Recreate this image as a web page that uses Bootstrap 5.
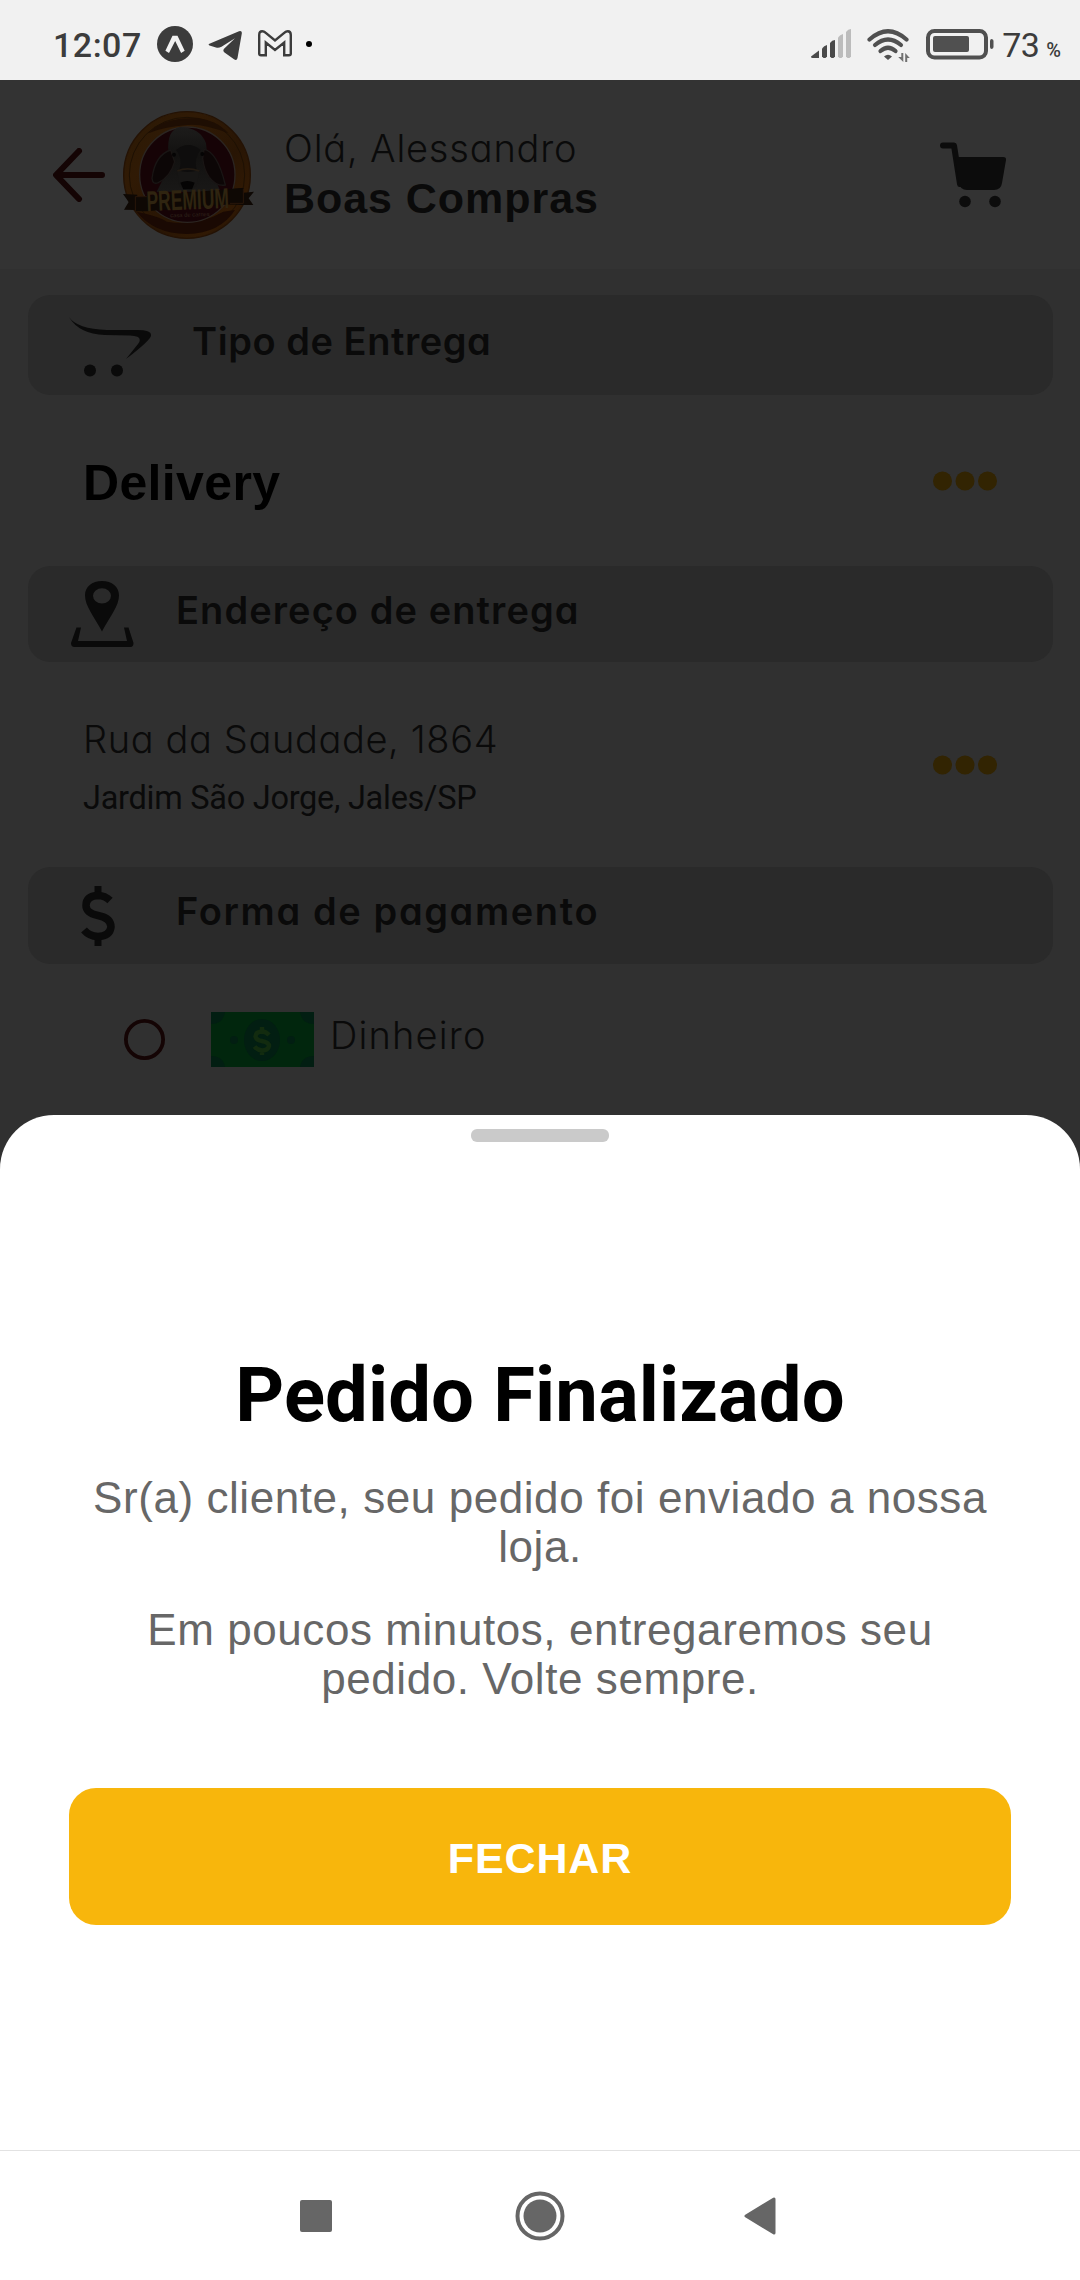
<!DOCTYPE html>
<html lang="pt-BR">
<head>
<meta charset="utf-8">
<meta name="viewport" content="width=device-width, initial-scale=1">
<title>Pedido Finalizado</title>
<link href="https://cdn.jsdelivr.net/npm/bootstrap@5.3.0/dist/css/bootstrap.min.css" rel="stylesheet">
<style>
  body { width: 1080px; height: 2280px; margin: 0; overflow: hidden; background: #303030; font-family: "Liberation Sans", Arial, sans-serif; }
  svg { display: block; flex: none; }
  .geo { font-family: Inter, sans-serif; font-feature-settings: "cv11" 1; color: #0a0a0a; white-space: nowrap; }
  .status-strip { height: 80px; background: #f1f1f1; padding: 8px 19px 0 53px; color: #3c3c3c; font-family: Roboto, sans-serif; }
  .clock { font-size: 34px; font-weight: 500; line-height: 40px; width: 104px; letter-spacing: .5px; padding-top: 17px; }
  .batt-num { font-size: 34px; line-height: 40px; margin-left: 8px; width: 44px; letter-spacing: -.6px; padding-top: 17px; }
  .batt-pct { font-size: 20px; line-height: 24px; padding-top: 30px; font-weight: 500; }
  .ico-expo { margin-top: 18px; }
  .ico-tg, .ico-mail { margin: 22px 0 0 15px; }
  .ico-dot { margin: 33px 0 0 14px; }
  .ico-signal { margin-top: 21px; }
  .ico-wifi, .ico-batt { margin: 21px 0 0 15px; }
  .ico-batt { margin-left: 16px; margin-right: -1px; }
  .app-head { height: 189px; background: #333; padding: 0 73px 0 53px; }
  .brand { margin-left: 18px; }
  .greet { margin: 0 auto 4px 30px; }
  .hello { font-size: 38px; font-weight: 300; line-height: 50px; letter-spacing: .8px; }
  .shop { font-size: 43px; font-weight: 700; line-height: 50px; color: #0a0a0a; letter-spacing: .95px; }
  .sec-bar { margin: 0 27px 0 28px; height: 97px; border-radius: 22px; background: #2a2a2a; padding-left: 42px; }
  .sec-bar .geo { font-size: 38px; font-weight: 600; line-height: 50px; margin-bottom: 9px; }
  .bar-type { height: 100px; margin-top: 26px; padding-left: 41px; }
  .bar-type svg { margin-top: 3px; }
  .bar-type .geo { margin-left: 41px; letter-spacing: .55px; }
  .bar-addr { height: 96px; }
  .bar-addr .geo { margin-left: 42px; letter-spacing: 1.08px; }
  .bar-pay { padding-left: 52px; }
  .bar-pay .geo { margin-left: 60px; letter-spacing: 1.62px; }
  .line-item { padding: 0 83px 0 83px; }
  .row-type { height: 171px; }
  .row-addr { height: 205px; }
  .addr { padding-top: 52px; gap: 9px; }
  .row-pay { height: 151px; padding-left: 124px; }
  .bill { margin-left: 46px; }
  .mode { font-size: 50px; font-weight: 700; color: #000; line-height: 60px; padding-top: 5px; letter-spacing: .35px; }
  .street { font-size: 38px; font-weight: 300; line-height: 50px; letter-spacing: .62px; }
  .cash { margin: 0 0 9px 16px; letter-spacing: 1.15px; }
  .town { font-family: Roboto, sans-serif; font-size: 32.5px; line-height: 50px; color: #0a0a0a; letter-spacing: -.27px; }
  .sheet { height: 1035px; background: #fff; border-radius: 54px 54px 0 0; padding: 14px 69px 0; }
  .grip { width: 138px; height: 13px; border-radius: 6px; background: #cacaca; }
  .done-title { font-family: Roboto, sans-serif; font-size: 76px; font-weight: 700; line-height: 90px; color: #000; margin: 208px 0 33px; letter-spacing: .12px; }
  .note { font-size: 44px; line-height: 49px; color: #676767; margin: 0 auto 34px; width: 920px; letter-spacing: .57px; }
  .close-btn { height: 137px; margin-top: 51px; border-radius: 27px; background: #f8b60c; color: #fff; font-size: 43px; font-weight: 700; border: 0; padding: 3px 0 0; letter-spacing: .9px; }
  .nav-strip { height: 130px; background: #fff; border-top: 1px solid #e2e2e2; padding: 0 304px 0 300px; }
  .nav-home { margin-left: 3px; }
</style>
</head>
<body class="d-flex flex-column">
  <div class="status-strip d-flex align-items-start">
    <div class="clock">12:07</div>
    <svg class="ico-expo" width="36" height="36" viewBox="0 0 36 36"><circle cx="18" cy="18" r="18" fill="#3c3c3c"/><path d="M15.500 9.800h5l7.200 15-3.600 2.200L18.200 15 12 27l-3.600-2.200z" fill="#f1f1f1"/><path d="M18 16.500l5 10.500H13z" fill="#3c3c3c"/></svg>
    <svg class="ico-tg" width="35" height="32" viewBox="0 0 35 32"><path d="M2 13.500L31 1.200Q34.200.3 33.800 3.500L29.500 28Q28.800 31 26 29.300L16.500 22.600Q14.300 20.700 16.300 18.600L27 8.300 13.500 16.700Q10.500 18.500 8 17.500L1.500 15.500Q-.5 14.500 2 13.500z" fill="#3c3c3c"/></svg>
    <svg class="ico-mail" width="34" height="27" viewBox="0 0 34 27"><path d="M1.200 5Q1.200 1.200 4.200 1.200 6 1.200 7.500 2.700L17 10.500 26.500 2.700Q28 1.200 29.800 1.200 32.800 1.200 32.800 5V23.500Q32.800 25.300 31 25.300H26.200V12.500L17 20 7.800 12.500V25.300H3Q1.200 25.300 1.200 23.500z" fill="none" stroke="#3c3c3c" stroke-width="2.400"/></svg>
    <svg class="ico-dot" width="6" height="6"><circle cx="3" cy="3" r="3" fill="#000"/></svg>
    <svg class="ico-signal ms-auto" width="41" height="30" viewBox="0 0 41 30"><g fill="#4a4a4a"><path d="M0 27.500L8 21.500V29H1.500Q0 29 0 27.500z"/><path d="M11 19.500Q13 16.500 16 16V27.500L14.500 29H12.500L11 27.500z"/><path d="M19 14Q21 11 24 11V27.500L22.500 29H20.500L19 27.500z"/></g><g fill="#bcbcbc"><path d="M27 8.500Q29 5.500 32 5V27.500L30.500 29H28.500L27 27.500z"/><path d="M35 3Q37 0 40 0V27.500L38.500 29H36.500L35 27.500z"/></g></svg>
    <svg class="ico-wifi" width="43" height="34" viewBox="0 0 43 34"><g fill="none" stroke="#505050" stroke-width="4.200" stroke-linecap="round"><path d="M2.500 10.500Q21 -6 39.500 10.500"/><path d="M8 16Q21 5 34 16"/><path d="M13.500 22Q21 15.500 28.500 22"/></g><path d="M17 27.500Q21 24 25 27.500L21 31z" fill="#505050"/><path d="M36.300 24V33L31.200 28H34.300V24zM38.200 33V24L42.800 29H40.200V33z" fill="#707070"/></svg>
    <svg class="ico-batt" width="69" height="31" viewBox="0 0 69 31"><rect x="2" y="2" width="58" height="26.500" rx="6.500" fill="none" stroke="#505050" stroke-width="4"/><rect x="7" y="7" width="36" height="16" rx="2" fill="#505050"/><path d="M64 12Q64 10 65.800 10 67.500 10.500 67.500 12V18Q67.500 19.500 65.800 20 64 20 64 18z" fill="#505050"/></svg>
    <div class="batt-num">73</div><div class="batt-pct">%</div>
  </div>

  <header class="app-head d-flex align-items-center">
    <svg width="52" height="54" viewBox="0 0 52 54"><path d="M49 27H3.500M26 3L3 27l23 24" fill="none" stroke="#140404" stroke-width="6" stroke-linecap="round" stroke-linejoin="round"/></svg>
    <svg class="brand" width="131" height="128" viewBox="69 63 393 384">
      <defs><linearGradient id="gold" x1="0" y1="0" x2="1" y2="1"><stop offset="0" stop-color="#2a1905"/><stop offset=".3" stop-color="#301a05"/><stop offset=".6" stop-color="#281504"/><stop offset=".8" stop-color="#301904"/><stop offset="1" stop-color="#221003"/></linearGradient>
      <linearGradient id="hide" x1="0" y1="0" x2="0" y2="1"><stop offset="0" stop-color="#1d1c1b"/><stop offset=".45" stop-color="#121110"/><stop offset="1" stop-color="#191817"/></linearGradient></defs>
      <circle cx="261" cy="255" r="190" fill="url(#gold)" stroke="#241204" stroke-width="4"/>
      <circle cx="261" cy="255" r="173" fill="none" stroke="#1d1003" stroke-width="3"/>
      <path d="M145 130Q190 80 290 85 350 90 385 130 310 100 262 105 190 110 145 130z" fill="#1e0e03"/>
      <path d="M110 365Q180 380 200 395 290 410 370 365L405 360Q360 430 261 432 160 430 110 365z" fill="#1a0903"/>
      <circle cx="262" cy="254" r="143" fill="#160306" stroke="#2b2521" stroke-width="4"/>
      <path d="M170 305Q190 265 205 240V185Q200 120 240 111 300 112 318 160 322 210 335 245L362 305z" fill="url(#hide)"/>
      <path d="M212 180Q165 195 156 265 158 285 175 278 212 260 224 215zM312 178Q352 185 376 285 350 290 328 262 312 240 308 205z" fill="#0c0606" stroke="#191514" stroke-width="4"/>
      <path d="M228 180Q250 205 238 240L245 290H282L290 240Q280 205 302 180 265 150 228 180z" fill="#0e0d0d"/>
      <path d="M232 240Q262 252 298 240L290 288Q262 306 238 288z" fill="#171615"/><path d="M241 278Q262 268 284 278L276 298H250z" fill="#050404"/><path d="M232 243Q262 230 298 243" fill="none" stroke="#221a12" stroke-width="5"/>
      <circle cx="222" cy="194" r="6" fill="#050404"/><circle cx="307" cy="192" r="6" fill="#050404"/>
      <path d="M69 312L112 314 105 360 72 359 86 336zM385 298L430 294 432 308 462 305 446 325 460 345 427 345 385 343z" fill="#0e0804"/>
      <path d="M106 320L385 298 430 294V340L140 364H106z" fill="#0e0804"/><path d="M106 362V320H140" fill="none" stroke="#28160a" stroke-width="3"/><path d="M430 296V340H390" fill="none" stroke="#28160a" stroke-width="3"/>
      <text x="0" y="0" transform="translate(141 364) rotate(-2.500) scale(1 1.300)" font-family="Liberation Sans" font-weight="700" font-size="66" textLength="247" lengthAdjust="spacingAndGlyphs" fill="#2f2410">PREMIUM</text>
      <text x="211" y="380" font-family="Liberation Sans" font-size="17" textLength="118" fill="#30251b" transform="rotate(-2 270 380)">casa de carnes</text>
    </svg>
    <div class="greet">
      <div class="hello geo">Olá, Alessandro</div>
      <div class="shop">Boas Compras</div>
    </div>
    <svg width="67" height="66" viewBox="0 0 67 66"><path d="M3 3.500H14L20 42" fill="none" stroke="#0c0c0c" stroke-width="6" stroke-linecap="round" stroke-linejoin="round"/><path d="M15 15H63Q66.500 15 66 18L62 41Q61 48 54 48H27Q20 48 19 41z" fill="#0c0c0c"/><circle cx="25" cy="59.500" r="5.800" fill="#0c0c0c"/><circle cx="55" cy="59.500" r="5.800" fill="#0c0c0c"/></svg>
  </header>

  <section class="sec-bar bar-type d-flex align-items-center">
    <svg width="82" height="60" viewBox="0 0 82 60"><path d="M0 0Q8 12 38 13H68Q82 13 82 18 83 22 57 42L69 27Q75 19 61 18.500L36 18Q10 17 0 0z" fill="#0a0a0a"/><circle cx="21" cy="53.500" r="6" fill="#0a0a0a"/><circle cx="48" cy="53.500" r="6" fill="#0a0a0a"/></svg>
    <div class="geo">Tipo de Entrega</div>
  </section>
  <div class="line-item row-type d-flex align-items-center justify-content-between">
    <div class="mode">Delivery</div>
    <svg width="64" height="20" viewBox="0 0 64 20" fill="#322402"><circle cx="9.500" cy="10" r="9.500"/><circle cx="32" cy="10" r="9.500"/><circle cx="54.500" cy="10" r="9.500"/></svg>
  </div>
  <section class="sec-bar bar-addr d-flex align-items-center">
    <svg width="64" height="67" viewBox="0 0 64 67"><path fill-rule="evenodd" d="M32 0C22 0 15 7 15 17 15 30 24 42 32 60 40 42 49 30 49 17 49 7 42 0 32 0zM32 8.500A9 9.200 0 1 1 32 26.900 9 9.200 0 1 1 32 8.500z" fill="#0a0a0a" transform="matrix(1 0 0 .84 0 0)"/><path d="M6.500 46.500H11L8 60H57L54 46.500H58.500L63.500 62Q63.500 66 60.500 66H4.500Q1 66 1 62z" fill="#0a0a0a"/></svg>
    <div class="geo">Endereço de entrega</div>
  </section>
  <div class="line-item row-addr d-flex align-items-center justify-content-between">
    <div class="addr align-self-start d-flex flex-column">
      <div class="street geo">Rua da Saudade, 1864</div>
      <div class="town">Jardim São Jorge, Jales/SP</div>
    </div>
    <svg width="64" height="20" viewBox="0 0 64 20" fill="#322402"><circle cx="9.500" cy="10" r="9.500"/><circle cx="32" cy="10" r="9.500"/><circle cx="54.500" cy="10" r="9.500"/></svg>
  </div>
  <section class="sec-bar bar-pay d-flex align-items-center">
    <svg width="36" height="60" viewBox="0 0 36 60"><path d="M18 0V8M18 52V60" stroke="#0a0a0a" stroke-width="7"/><path d="M30 14.500Q25 9.500 18 9.500 6 10 6 19.500 6 27 18 29.500 31 32 31 41 30 50 18 50.500 9 50 4 44" fill="none" stroke="#0a0a0a" stroke-width="7.500"/></svg>
    <div class="geo">Forma de pagamento</div>
  </section>
  <div class="row-pay d-flex align-items-center">
    <svg width="41" height="41" viewBox="0 0 41 41"><circle cx="20.500" cy="20.500" r="18.600" fill="none" stroke="#140404" stroke-width="3.800"/></svg>
    <svg class="bill" width="103" height="55" viewBox="0 0 103 55"><rect width="103" height="55" fill="#01260d"/><g fill="#021e12"><ellipse cx="51" cy="28" rx="18" ry="21"/><circle cx="23" cy="28" r="4"/><circle cx="80" cy="28" r="4"/><path d="M0 0H14Q12 12 0 12zM103 0H89Q91 12 103 12zM0 55H14Q12 44 0 44zM103 55H89Q91 44 103 44z"/></g><path d="M51 15V20M51 38V43M58 23Q55 19.500 51 19.500 44.500 20 44.500 24.500 45 28 51 29 58 30.500 58 34 57 38.500 51 38.500 46 38 43.500 34.500" fill="none" stroke="#122b0f" stroke-width="4.500"/></svg>
    <div class="geo street cash">Dinheiro</div>
  </div>

  <main class="sheet d-flex flex-column text-center">
    <div class="grip mx-auto"></div>
    <h1 class="done-title">Pedido Finalizado</h1>
    <p class="note">Sr(a) cliente, seu pedido foi enviado a nossa loja.</p>
    <p class="note">Em poucos minutos, entregaremos seu pedido. Volte sempre.</p>
    <button type="button" class="close-btn btn w-100">FECHAR</button>
  </main>
  <nav class="nav-strip d-flex align-items-center justify-content-between">
    <svg width="32" height="32"><rect width="32" height="32" rx="2" fill="#666"/></svg>
    <svg class="nav-home" width="50" height="50" viewBox="0 0 50 50"><circle cx="25" cy="25" r="22.500" fill="none" stroke="#666" stroke-width="4"/><circle cx="25" cy="25" r="16.500" fill="#666"/></svg>
    <svg width="32" height="38" viewBox="0 0 32 38"><path d="M30 2V36L2 19z" fill="#666" stroke="#666" stroke-width="3" stroke-linejoin="round"/></svg>
  </nav>
<script src="https://cdn.jsdelivr.net/npm/bootstrap@5.3.0/dist/js/bootstrap.bundle.min.js"></script>
</body>
</html>
